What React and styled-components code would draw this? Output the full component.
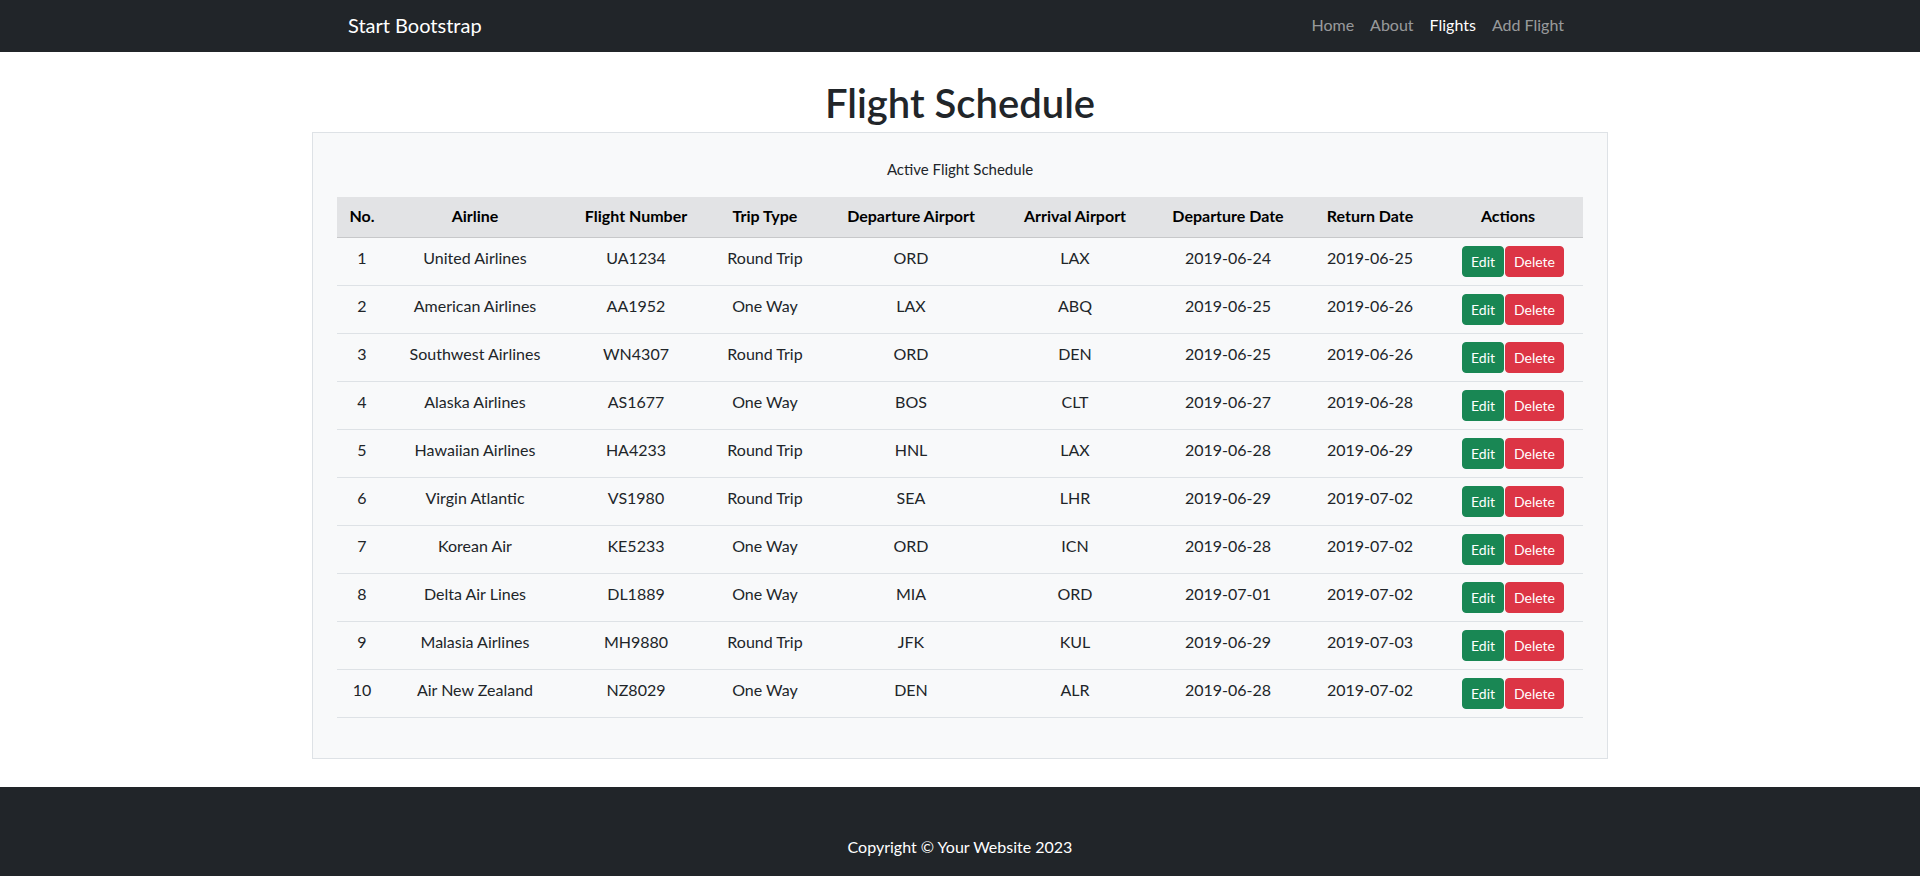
import React from "react";
import styled, { createGlobalStyle } from "styled-components";

const GlobalStyle = createGlobalStyle`
  *, *::before, *::after { box-sizing: border-box; }
  body {
    margin: 0;
    font-family: Lato, "Open Sans", "Liberation Sans", sans-serif;
    font-size: 16px;
    line-height: 1.5;
    color: #212529;
    background: #fff;
  }
`;

const Navbar = styled.nav`
  background: #212529;
`;

const NavInner = styled.div`
  max-width: 1320px;
  margin: 0 auto;
  padding: 0 48px;
  height: 52px;
  display: flex;
  align-items: center;
  justify-content: space-between;
`;

const Brand = styled.a`
  font-size: 20px;
  color: #fff;
  text-decoration: none;
  line-height: 30px;
  margin-top: -2px;
`;

const NavList = styled.div`
  display: flex;
  align-items: center;
  margin-top: -2px;
`;

const NavLink = styled.a`
  padding: 8px;
  color: ${(p) => (p.$active ? "#fff" : "rgba(255,255,255,0.55)")};
  text-decoration: none;
  font-size: 16px;
`;

const Main = styled.main`
  max-width: 1320px;
  margin: 0 auto;
  padding: 24px 12px 28px;
`;

const Title = styled.h1`
  margin: 0 0 5px;
  padding-top: 3px;
  text-align: center;
  font-size: 40px;
  font-weight: 600;
  line-height: 1.2;
  color: #212529;
`;

const Card = styled.div`
  background: #f8f9fa;
  border: 1px solid #dee2e6;
  padding: 24px;
`;

const Table = styled.table`
  width: 100%;
  border-collapse: collapse;
  margin-bottom: 16px;
  text-align: center;
  table-layout: fixed;
`;

const Caption = styled.caption`
  caption-side: top;
  padding: 0 0 16px;
  color: #212529;
  font-size: 15px;
  line-height: 24px;
`;

const HeadRow = styled.tr`
  background: #e2e3e5;
  border-bottom: 1px solid #c7c8ca;
`;

const Th = styled.th`
  padding: 7px 8px 9px;
  font-weight: 700;
  color: #000;
  font-size: 16px;
  line-height: 24px;
`;

const Row = styled.tr`
  border-bottom: 1px solid #dee2e6;
`;

const Td = styled.td`
  padding: 4px 8px 12px;
  color: #212529;
  line-height: 24px;
  vertical-align: middle;
  white-space: nowrap;
`;

const ActionTd = styled.td`
  padding: 8px;
  vertical-align: middle;
`;

const ActionCell = styled.div`
  display: flex;
  justify-content: center;
  gap: 1px;
  padding-left: 10px;
`;

const Button = styled.button`
  font-family: inherit;
  font-size: 14px;
  line-height: 21px;
  padding: 4px 8px;
  border: 1px solid ${(p) => (p.$variant === "danger" ? "#dc3545" : "#198754")};
  background: ${(p) => (p.$variant === "danger" ? "#dc3545" : "#198754")};
  color: #fff;
  border-radius: 4px;
  cursor: pointer;
`;

const Footer = styled.footer`
  background: #212529;
  padding: 48px 0;
  text-align: center;
  color: #fff;
`;

const FooterText = styled.p`
  margin: 0;
  font-size: 16px;
  line-height: 24px;
`;

const columns = [
  { label: "No.", width: 50 },
  { label: "Airline", width: 176 },
  { label: "Flight Number", width: 146 },
  { label: "Trip Type", width: 112 },
  { label: "Departure Airport", width: 180 },
  { label: "Arrival Airport", width: 148 },
  { label: "Departure Date", width: 158 },
  { label: "Return Date", width: 126 },
  { label: "Actions", width: 150 },
];

const flights = [
  [1, "United Airlines", "UA1234", "Round Trip", "ORD", "LAX", "2019-06-24", "2019-06-25"],
  [2, "American Airlines", "AA1952", "One Way", "LAX", "ABQ", "2019-06-25", "2019-06-26"],
  [3, "Southwest Airlines", "WN4307", "Round Trip", "ORD", "DEN", "2019-06-25", "2019-06-26"],
  [4, "Alaska Airlines", "AS1677", "One Way", "BOS", "CLT", "2019-06-27", "2019-06-28"],
  [5, "Hawaiian Airlines", "HA4233", "Round Trip", "HNL", "LAX", "2019-06-28", "2019-06-29"],
  [6, "Virgin Atlantic", "VS1980", "Round Trip", "SEA", "LHR", "2019-06-29", "2019-07-02"],
  [7, "Korean Air", "KE5233", "One Way", "ORD", "ICN", "2019-06-28", "2019-07-02"],
  [8, "Delta Air Lines", "DL1889", "One Way", "MIA", "ORD", "2019-07-01", "2019-07-02"],
  [9, "Malasia Airlines", "MH9880", "Round Trip", "JFK", "KUL", "2019-06-29", "2019-07-03"],
  [10, "Air New Zealand", "NZ8029", "One Way", "DEN", "ALR", "2019-06-28", "2019-07-02"],
];

export default function App() {
  return (
    <>
      <GlobalStyle />
      <Navbar>
        <NavInner>
          <Brand href="#">Start Bootstrap</Brand>
          <NavList>
            <NavLink href="#">Home</NavLink>
            <NavLink href="#">About</NavLink>
            <NavLink href="#" $active>Flights</NavLink>
            <NavLink href="#">Add Flight</NavLink>
          </NavList>
        </NavInner>
      </Navbar>
      <Main>
        <Title>Flight Schedule</Title>
        <Card>
          <Table>
            <Caption>Active Flight Schedule</Caption>
            <colgroup>
              {columns.map((c) => (
                <col key={c.label} style={{ width: c.width }} />
              ))}
            </colgroup>
            <thead>
              <HeadRow>
                {columns.map((c) => (
                  <Th key={c.label}>{c.label}</Th>
                ))}
              </HeadRow>
            </thead>
            <tbody>
              {flights.map((f) => (
                <Row key={f[0]}>
                  {f.map((v, i) => (
                    <Td key={i}>{v}</Td>
                  ))}
                  <ActionTd>
                    <ActionCell>
                      <Button>Edit</Button>
                      <Button $variant="danger">Delete</Button>
                    </ActionCell>
                  </ActionTd>
                </Row>
              ))}
            </tbody>
          </Table>
        </Card>
      </Main>
      <Footer>
        <FooterText>Copyright © Your Website 2023</FooterText>
      </Footer>
    </>
  );
}
